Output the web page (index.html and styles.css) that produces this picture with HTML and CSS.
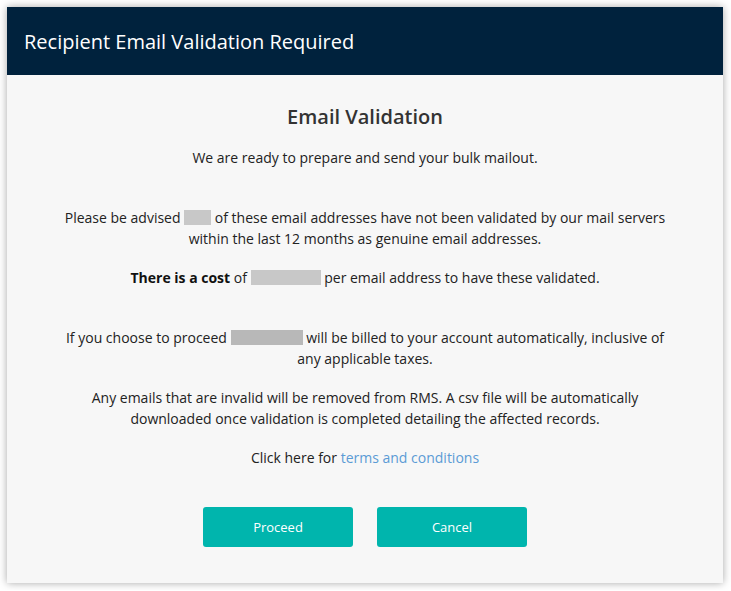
FILE: index.html
```html
<!DOCTYPE html>
<html lang="en">
<head>
  <meta charset="UTF-8" />
  <title>Recipient Email Validation Required</title>
  <link rel="stylesheet" href="styles.css">
</head>
<body>
<div class="modal">
  <div class="modal-header">
    <h1 class="modal-title">Recipient Email Validation Required</h1>
  </div>
  <div class="modal-body">
    <h2 class="section-title">Email Validation</h2>
    <p>We are ready to prepare and send your bulk mailout.</p>
    <br>
    <p>Please be advised <span class="redact redact-count"></span> of these email addresses have not been validated by our mail servers<br>within the last 12 months as genuine email addresses.</p>
    <p><strong>There is a cost</strong> of <span class="redact redact-price"></span> per email address to have these validated.</p>
    <br>
    <p>If you choose to proceed <span class="redact redact-total"></span> will be billed to your account automatically, inclusive of<br>any applicable taxes.</p>
    <p>Any emails that are invalid will be removed from RMS. A csv file will be automatically<br>downloaded once validation is completed detailing the affected records.</p>
    <p>Click here for <a href="#" class="link">terms and conditions</a></p>

    <div class="actions">
      <button class="btn">Proceed</button>
      <button class="btn">Cancel</button>
    </div>
  </div>
</div>
</body>
</html>
```

FILE: styles.css
```css
body {
  margin: 0;
  padding: 7px;
  background: #ffffff;
  font-family: 'Open Sans', 'Liberation Sans', sans-serif;
}

/* dialog frame */
.modal {
  width: 716px;
  background: #f7f7f7;
  box-shadow: 0 0 8px rgba(0, 0, 0, 0.35);
}

.modal-header {
  background: #00223d;
  height: 68px;
  display: flex;
  align-items: center;
  padding: 0 17px;
}

.modal-title {
  margin: 0;
  font-size: 20px;
  font-weight: 400;
  color: #ffffff;
}

.modal-body {
  padding: 29px 40px 36px;
  text-align: center;
  font-size: 14px;
  line-height: 21px;
  color: #222222;
}

.section-title {
  margin: 0 0 17px;
  font-size: 20px;
  line-height: 26px;
  font-weight: 600;
  color: #333333;
}

.modal-body p {
  margin: 0 0 18px;
}

.modal-body strong {
  font-weight: 700;
  color: #111111;
}

/* hidden values */
.redact {
  display: inline-block;
  height: 15px;
  vertical-align: -2px;
  background: #c8c8c8;
}

.redact-count { width: 27px; }
.redact-price { width: 70px; }
.redact-total { width: 72px; background: #b8b8b8; }

.link {
  color: #5b9bd5;
  text-decoration: none;
}

.actions {
  display: flex;
  justify-content: center;
  gap: 24px;
  margin-top: 39px;
}

.btn {
  width: 150px;
  height: 40px;
  border: 0;
  border-radius: 3px;
  background: #00b5ad;
  color: #ffffff;
  font-family: inherit;
  font-size: 13px;
  cursor: pointer;
}
```
